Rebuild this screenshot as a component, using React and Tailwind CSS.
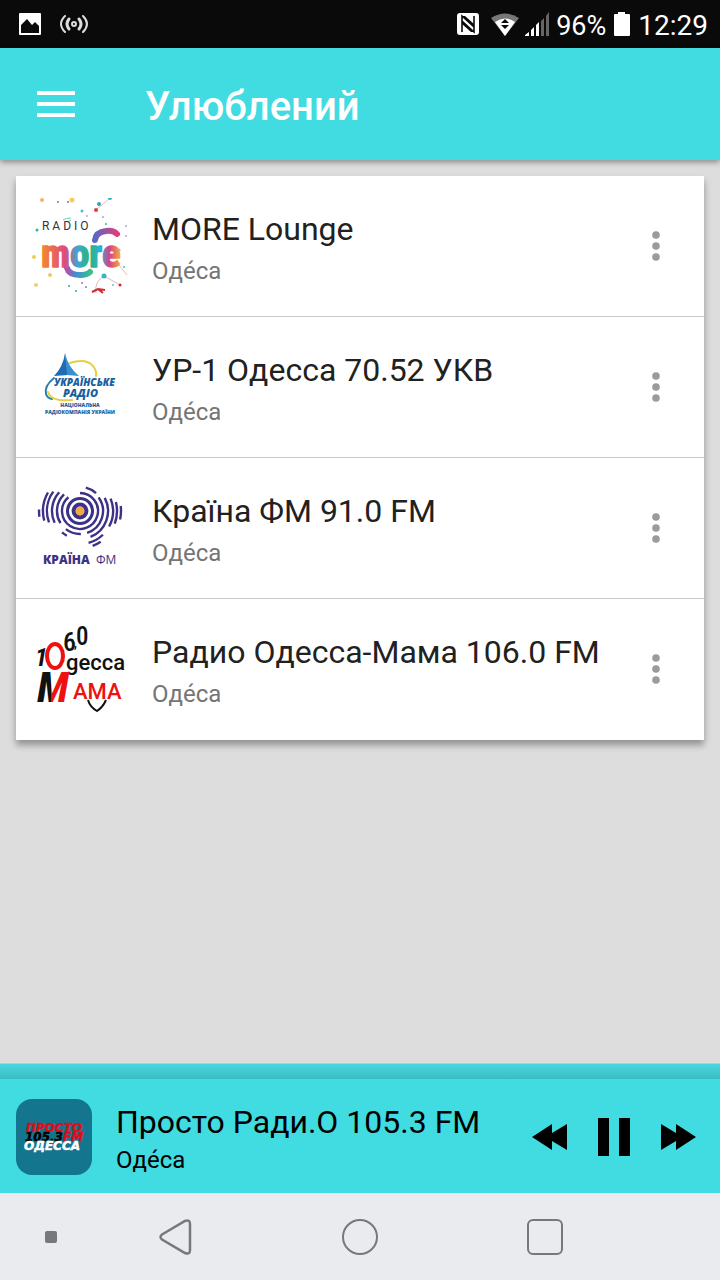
import React from 'react';

const SANS = "font-['Roboto',sans-serif]";

function MoreLogo() {
    const dots = [
        [10, 2, 2, '#f3b562'], [40, 2, 2.5, '#ecd25c'], [78, 0, 2, '#22b5c4'], [67, 6, 2, '#27a9b8'],
        [64, 12, 2, '#d8433a'], [50, 13, 1.5, '#3cc6cc'], [5, 32, 1.5, '#27b3a6'], [74, 26, 1, '#39b9a0'],
        [2, 59, 2, '#e9cf58'], [18, 77, 2, '#f0c66a'], [4, 87, 2, '#f2cd72'], [37, 88, 1, '#3ba67c'],
        [86, 66, 1.5, '#d92f3f'], [92, 69, 1, '#49c98d'], [72, 78, 2.5, '#33b7c0'], [88, 87, 1.5, '#cc2b33'],
        [81, 87, 1, '#58c4de'], [50, 85, 1, '#8f7bc0'], [54, 89, 1, '#8f7bc0'], [44, 93, 1, '#3ba67c'],
        [87, 52, 1.5, '#45bfe5'], [94, 38, 1, '#b5a6c0'], [94, 28, 1, '#b5a6c0'], [26, 4, 1, '#85729b'],
        [36, 4, 1, '#85729b'], [55, 18, 1, '#b7a6d4'], [71, 19, 1, '#a5adb5'],
    ];
    return (
        <svg viewBox="0 0 96 96" className="size-24 shrink-0" role="img" aria-label="Radio More">
            <defs>
                <linearGradient id="more" x1="0" x2="1" y1="0" y2="0">
                    <stop offset="0" stopColor="#f58a2c" />
                    <stop offset="0.3" stopColor="#e04a7c" />
                    <stop offset="0.46" stopColor="#3fa6d8" />
                    <stop offset="0.6" stopColor="#2fb56c" />
                    <stop offset="0.74" stopColor="#25b4dc" />
                    <stop offset="0.86" stopColor="#d93f8b" />
                    <stop offset="1" stopColor="#f6b02e" />
                </linearGradient>
                <linearGradient id="swashLow" x1="0" x2="1" y1="0" y2="0">
                    <stop offset="0" stopColor="#b052a8" />
                    <stop offset="0.4" stopColor="#3c8fd8" />
                    <stop offset="1" stopColor="#3bbf8c" />
                </linearGradient>
                <linearGradient id="swashTop" x1="0" x2="1" y1="0" y2="0">
                    <stop offset="0" stopColor="#5a68c4" />
                    <stop offset="1" stopColor="#e03d7f" />
                </linearGradient>
            </defs>
            <g fill="none" stroke="#d89aa0" strokeWidth="0.7">
                <path d="M64 12 78 0M72 78Q62 84 64 95M72 78 88 87M86 66 95 77" />
            </g>
            <path d="M31 22Q34 20 39 20M35 24 39 22" fill="none" stroke="#69cfb5" />
            <path d="M60 94 66 91 73 92M66 91 71 95" fill="none" stroke="#cf2b35" strokeWidth="2" />
            {dots.map(([x, y, r, fill]) => (
                <circle key={`${x}-${y}`} cx={x} cy={y} r={r} fill={fill} />
            ))}
            <text x="10" y="32" fontSize="12" fill="#333" fontFamily="Roboto">R A D I O</text>
            <path d="M35 70Q37 77 48 77Q55 77 58 74" fill="none" stroke="url(#swashLow)" strokeWidth="6" strokeLinecap="round" />
            <path d="M63 42Q64 34 74 33Q81 32 85 36" fill="none" stroke="url(#swashTop)" strokeWidth="6" strokeLinecap="round" />
            <text x="9" y="69" fontSize="39" fontWeight="700" fill="url(#more)" stroke="url(#more)" strokeWidth="1.5" strokeLinejoin="round" fontFamily="Roboto Condensed, Roboto">more</text>
        </svg>
    );
}

function UkrRadioLogo() {
    return (
        <svg viewBox="0 0 96 96" className="size-24 shrink-0" role="img" aria-label="Українське радіо">
            <g fill="none" strokeLinecap="round">
                <path d="M38 24Q54 19 61 27Q65 32 64 37" stroke="#e2cf45" strokeWidth="2" />
                <path d="M22 39Q12 47 14 55Q15 59 20 60" stroke="#2f7fae" strokeWidth="2" />
                <path d="M16 53Q19 63 40 61" stroke="#e2cf45" strokeWidth="2" />
            </g>
            <path d="M33 14 36 36 22 37Q31 28 33 14Z" fill="#1d6cb4" />
            <path d="M33 14Q36 28 47 37L35 36Z" fill="#3c8fcf" />
            <g fill="#19609f" fontFamily="Open Sans, sans-serif" fontWeight="800">
                <text x="22" y="47" fontSize="10" fontStyle="italic">УКРАЇНСЬКЕ</text>
                <text x="31" y="58" fontSize="11" fontStyle="italic">РАДІО</text>
                <text x="48" y="68" fontSize="5" textAnchor="middle">НАЦІОНАЛЬНА</text>
                <text x="48" y="75" fontSize="5" textAnchor="middle">РАДІОКОМПАНІЯ УКРАЇНИ</text>
            </g>
        </svg>
    );
}

// [radius, start angle, end angle], clockwise from east
const WAVES = [
    [18, -90, 230], [24, -76, -48], [23, -36, 72], [23, 88, 128], [23, 148, 226], [28, -28, 68], [28, 118, 130],
    [28, 155, 222], [33, -22, 28], [33, 46, 75], [33, 160, 216], [37, -14, 20], [37, 56, 70], [37, 165, 210],
    [41, -7, 12], [41, 172, 182],
];

function arc(r, from, to) {
    const point = (deg) => {
        const a = (deg * Math.PI) / 180;
        return `${(48 + r * Math.cos(a)).toFixed(2)} ${(31 + r * Math.sin(a)).toFixed(2)}`;
    };
    return `M${point(from)}A${r} ${r} 0 ${to - from > 180 ? 1 : 0} 1 ${point(to)}`;
}

function KrainaLogo() {
    return (
        <svg viewBox="0 0 96 96" className="size-24 shrink-0" role="img" aria-label="Країна ФМ">
            <g fill="none" stroke="#3c3187" strokeWidth="2.4">
                <circle cx="48" cy="31" r="6.4" strokeWidth="4" />
                <circle cx="48" cy="31" r="12.5" strokeWidth="3" />
                {WAVES.map(([r, from, to]) => (
                    <path key={`${r}-${from}`} d={arc(r, from, to)} />
                ))}
            </g>
            <circle cx="48" cy="31" r="4.2" fill="#f5a83a" />
            <g fill="#3c3187" fontFamily="Open Sans, sans-serif" fontSize="12">
                <text x="11" y="84" fontWeight="800">КРАЇНА</text>
                <text x="64" y="84" fontWeight="400">ФМ</text>
            </g>
        </svg>
    );
}

function MamaLogo() {
    return (
        <svg viewBox="0 0 96 96" className="size-24 shrink-0" role="img" aria-label="106.0 Одесса Мама">
            <defs>
                <linearGradient id="mama" x1="0" x2="1" y1="0" y2="0">
                    <stop offset="0.42" stopColor="#111" />
                    <stop offset="0.42" stopColor="#ee1111" />
                </linearGradient>
            </defs>
            <g fontFamily="Roboto Condensed, Roboto, sans-serif" fill="#111">
                <text x="3" y="45" fontSize="25" fontWeight="700" fontStyle="italic">1</text>
                <text x="31" y="30" fontSize="26" fontWeight="500">6</text>
                <text x="42" y="27" fontSize="12" fontWeight="700">,</text>
                <text x="44" y="24" fontSize="25" fontWeight="500">0</text>
                <text x="34" y="49" fontSize="22" fontWeight="500" fontFamily="Roboto, sans-serif">gecca</text>
                <text x="5" y="81" fontSize="43" fontWeight="700" fontStyle="italic" fill="url(#mama)">М</text>
                <text x="41" y="78" fontSize="22" fontWeight="500" fontFamily="Roboto, sans-serif" fill="#ee1111">АМА</text>
            </g>
            <ellipse cx="23" cy="35" rx="8" ry="12" fill="none" stroke="#ee1111" strokeWidth="4" />
            <path d="M56 79Q58 86 65 90Q71 86 74 79" fill="none" stroke="#111" strokeWidth="2" />
        </svg>
    );
}

function ProstoLogo() {
    return (
        <svg viewBox="0 0 76 76" className="size-[76px] shrink-0 rounded-2xl bg-[#13768e]" role="img" aria-label="Просто 105.3 FM Одесса">
            <g fontFamily="DejaVu Sans, sans-serif" fontWeight="700" fontStyle="italic" strokeWidth="0.5">
                <text x="10" y="33" fontSize="12" fill="#d9101c" stroke="#d9101c">ПРОСТО</text>
                <text x="9" y="42" fontSize="12" fill="#000" stroke="#000">105,3<tspan fill="#d9101c" stroke="#d9101c">FM</tspan></text>
                <text x="8" y="51" fontSize="12" fill="#fff" stroke="#fff">ОДЕССА</text>
            </g>
        </svg>
    );
}

const STATIONS = [
    { name: 'MORE Lounge', city: 'Оде́са', Logo: MoreLogo },
    { name: 'УР-1 Одесса 70.52 УКВ', city: 'Оде́са', Logo: UkrRadioLogo },
    { name: 'Країна ФМ 91.0 FM', city: 'Оде́са', Logo: KrainaLogo },
    { name: 'Радио Одесса-Мама 106.0 FM', city: 'Оде́са', Logo: MamaLogo },
];

function StatusBar() {
    return (
        <div className="flex h-12 items-center justify-between bg-[#0a0a0a] pr-3 pl-[19px] text-white">
            <div className="flex items-center gap-[18px]">
                <svg viewBox="0 0 22 22" className="size-[22px]">
                    <path fill="#fff" fillRule="evenodd" d="M0 1Q0 0 1 0H21Q22 0 22 1V21Q22 22 21 22H1Q0 22 0 21ZM2 20H20V13L16 9 13 12 8 6 2 12Z" />
                </svg>
                <svg viewBox="0 0 30 22" className="h-[22px] w-[30px]" fill="none" stroke="#ddd" strokeLinecap="round">
                    <circle cx="15" cy="11" r="2" strokeWidth="2" />
                    <path strokeWidth="3" d="M10 6Q6 11 10 16M20 6Q24 11 20 16" />
                    <path strokeWidth="2" d="M6 3Q-2 11 6 19M24 3Q32 11 24 19" />
                </svg>
            </div>
            <div className="flex items-center">
                <svg viewBox="0 0 22 22" className="mr-3 size-[22px]">
                    <rect width="22" height="22" rx="3" fill="#fff" />
                    <path d="M5 19V3L17 14V3M17 3V19L5 8" fill="none" stroke="#0a0a0a" strokeWidth="1.6" />
                    <path d="M5 3H8L17 11V14ZM5 8 17 19H14L5 11Z" fill="#0a0a0a" />
                </svg>
                <svg viewBox="0 0 28 23" className="mr-[6px] h-[23px] w-7">
                    <path d="M0 5Q14 -4 28 5L14 23Z" fill="#777" />
                    <path d="M4 9Q14 2 24 9L14 23Z" fill="#fff" />
                    <path d="M10 10 14 6 18 10ZM10 12H18L14 16Z" fill="#0a0a0a" />
                </svg>
                <svg viewBox="0 0 25 24" className="mr-[6px] h-6 w-[25px]">
                    <path d="M0 24V23L4 20V24ZM6 18 9 15V24H6ZM11 13 14 10V24H11Z" fill="#fff" />
                    <path d="M16 9 19 6V24H16ZM21 4 24 0V24H21Z" fill="#666" />
                </svg>
                <span className="pt-[3px] text-[27px] leading-8">96%</span>
                <svg viewBox="0 0 16 24" className="mx-2 h-6 w-4">
                    <path d="M4 0H11V2H15Q16 2 16 3V23Q16 24 15 24H1Q0 24 0 23V3Q0 2 1 2H4Z" fill="#fff" />
                </svg>
                <span className="pt-[3px] text-[28px] leading-8">12:29</span>
            </div>
        </div>
    );
}

function StationRow({ name, city, Logo }) {
    return (
        <li className="flex h-[141px] items-center border-b border-[#c8c8c8] bg-white pr-6 pl-4 last:border-transparent">
            <Logo />
            <div className="ml-6 min-w-0 flex-1 pt-[6px]">
                <h2 className="truncate text-[32px] leading-10 text-[#212121]">{name}</h2>
                <p className="mt-1 text-2xl leading-9 text-[#757575]">{city}</p>
            </div>
            <button type="button" aria-label="Меню" className="flex h-16 w-12 items-center justify-center">
                <svg viewBox="0 0 8 30" className="h-[30px] w-2" fill="#9b9b9b">
                    <circle cx="4" cy="4" r="3.8" />
                    <circle cx="4" cy="15" r="3.8" />
                    <circle cx="4" cy="26" r="3.8" />
                </svg>
            </button>
        </li>
    );
}

function Player() {
    return (
        <section className="border-t border-[#7fe3e8] bg-[#41dbe2]">
            <div className="h-[15px] bg-linear-to-b from-[#48d8df] to-[#3bbcc3]" />
            <div className="flex h-[114px] items-center px-4 pt-[2px]">
                <ProstoLogo />
                <div className="ml-6 min-w-0 flex-1 pt-[6px] text-black">
                    <h2 className="truncate text-[32px] leading-10">Просто Ради.О 105.3 FM</h2>
                    <p className="text-2xl leading-9">Оде́са</p>
                </div>
                <div className="mr-2 flex items-center gap-[31px]">
                    <button type="button" aria-label="Назад">
                        <svg viewBox="0 0 35 26" className="h-[26px] w-[35px]"><path d="M0 13 20 0V9L35 0V26L20 17V26Z" /></svg>
                    </button>
                    <button type="button" aria-label="Пауза">
                        <svg viewBox="0 0 32 38" className="h-[38px] w-8"><path d="M0 0H11V38H0ZM21 0H32V38H21Z" /></svg>
                    </button>
                    <button type="button" aria-label="Вперед">
                        <svg viewBox="0 0 35 26" className="h-[26px] w-[35px]"><path d="M35 13 15 0V9L0 0V26L15 17V26Z" /></svg>
                    </button>
                </div>
            </div>
        </section>
    );
}

function NavBar() {
    return (
        <nav className="grid h-[87px] grid-cols-[82px_1fr_1fr_1fr_82px] items-center justify-items-center bg-[#e9ebee]">
            <button type="button" aria-label="Сховати" className="mr-[25px] justify-self-end">
                <span className="block size-3 rounded-xs bg-[#77787b]" />
            </button>
            <button type="button" aria-label="Повернутися">
                <svg viewBox="0 0 34 36" className="h-9 w-[34px]" fill="none" stroke="#77787b" strokeWidth="2.5">
                    <path d="M4 15.5 27 2Q32 0 32 5V31Q32 36 27 34L4 20.5Q1 18 4 15.5Z" />
                </svg>
            </button>
            <button type="button" aria-label="Додому">
                <span className="block size-9 rounded-full border-2 border-[#77787b]" />
            </button>
            <button type="button" aria-label="Останні">
                <span className="block size-9 rounded-md border-2 border-[#77787b]" />
            </button>
        </nav>
    );
}

export default function App() {
    return (
        <div className={`flex min-h-screen flex-col bg-[#dddddd] ${SANS}`}>
            <StatusBar />
            <header className="flex h-28 items-center bg-[#41dbe2] pl-[37px] shadow-[0_2px_6px_rgba(0,0,0,0.4)]">
                <button type="button" aria-label="Відкрити меню" className="flex w-[38px] flex-col gap-[7px]">
                    <span className="h-1 bg-white" />
                    <span className="h-1 bg-white" />
                    <span className="h-1 bg-white" />
                </button>
                <h1 className="ml-[70px] pt-[6px] text-[40px] leading-[48px] font-medium text-white">Улюблений</h1>
            </header>
            <main className="flex-1 p-4">
                <ul className="bg-white shadow-[0_5px_7px_rgba(0,0,0,0.35)]">
                    {STATIONS.map((station) => (
                        <StationRow key={station.name} {...station} />
                    ))}
                </ul>
            </main>
            <Player />
            <NavBar />
        </div>
    );
}
